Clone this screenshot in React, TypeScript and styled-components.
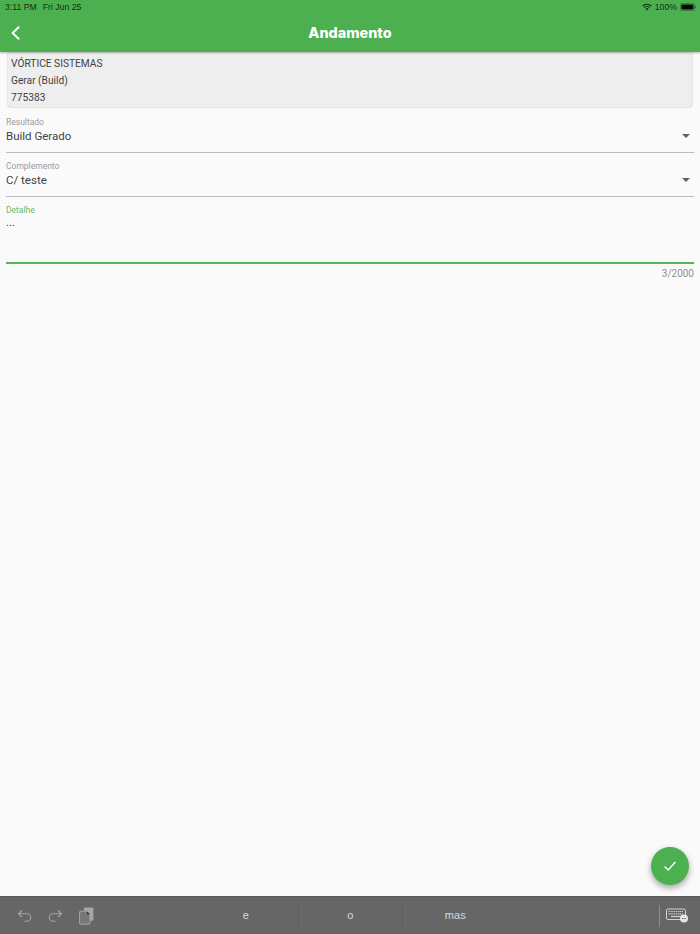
import React from "react";
import styled, { createGlobalStyle } from "styled-components";

const Global = createGlobalStyle`
  html, body { margin: 0; padding: 0; background: #fafafa; }
  #root { height: 934px; }
  * { box-sizing: border-box; }
`;

const Page = styled.div`
  width: 700px;
  height: 934px;
  display: flex;
  flex-direction: column;
  background: #fafafa;
  font-family: Roboto, "Liberation Sans", sans-serif;
  position: relative;
  overflow: hidden;
`;

const Header = styled.header`
  height: 52px;
  flex: none;
  background: #4caf50;
  box-shadow: 0 1px 2px rgba(0, 0, 0, 0.28);
  display: flex;
  flex-direction: column;
  position: relative;
  z-index: 2;
`;

const StatusBar = styled.div`
  height: 13px;
  padding: 1px 4px 0 5px;
  display: flex;
  align-items: center;
  justify-content: space-between;
  font-family: "Liberation Sans", sans-serif;
  font-size: 8.7px;
  color: #12300f;
`;

const StatusGroup = styled.div`
  display: flex;
  align-items: center;
  gap: 6px;
`;

const StatusRight = styled(StatusGroup)`
  gap: 3px;
`;

const NavBar = styled.div`
  flex: 1;
  display: flex;
  align-items: center;
  justify-content: center;
  position: relative;
`;

const BackButton = styled.div`
  position: absolute;
  left: 10px;
  top: 12px;
  width: 12px;
  height: 16px;
  display: flex;
`;

const Title = styled.h1`
  margin: 0;
  font-family: Inter, sans-serif;
  font-weight: 800;
  font-size: 14.4px;
  color: #fff;
`;

const Content = styled.main`
  flex: 1;
  padding: 1px 6px 0;
  display: flex;
  flex-direction: column;
`;

const Card = styled.section`
  margin: 0 2px;
  height: 54px;
  flex: none;
  background: #eeeeee;
  border-radius: 0 0 3px 3px;
  box-shadow: 0 0 1.5px rgba(0, 0, 0, 0.4);
  padding: 2px 3px 0;
  font-size: 10.2px;
  color: #424242;
  display: flex;
  flex-direction: column;
`;

const CardLine = styled.div`
  height: 17px;
  line-height: 17px;
`;

const Field = styled.div<{ $height: number; $top: number; $active?: boolean }>`
  height: ${(p) => p.$height}px;
  flex: none;
  border-bottom: ${(p) => (p.$active ? "2px solid #55b359" : "1px solid #bdbdbd")};
  position: relative;
  padding-top: ${(p) => p.$top}px;
`;

const FieldLabel = styled.div<{ $active?: boolean }>`
  font-size: 8.5px;
  line-height: 10px;
  color: ${(p) => (p.$active ? "#66bb6a" : "#9a9a9a")};
`;

const FieldValue = styled.div`
  font-size: 11.5px;
  line-height: 14px;
  margin-top: 2px;
  color: #424242;
`;

const DetailValue = styled(FieldValue)`
  margin-top: 0;
`;

const Caret = styled.span`
  position: absolute;
  right: 4px;
  bottom: 14px;
  width: 0;
  height: 0;
  border-left: 4px solid transparent;
  border-right: 4px solid transparent;
  border-top: 4px solid #616161;
`;

const Counter = styled.div`
  font-size: 10px;
  line-height: 12px;
  margin-top: 4px;
  text-align: right;
  color: #8f8f8f;
`;

const Fab = styled.button`
  position: absolute;
  right: 11px;
  bottom: 49px;
  width: 38px;
  height: 38px;
  border: 0;
  padding: 0;
  border-radius: 50%;
  background: #4caf50;
  box-shadow: 0 3px 6px rgba(0, 0, 0, 0.35);
  display: flex;
  align-items: center;
  justify-content: center;
`;

const Keyboard = styled.footer`
  height: 38px;
  flex: none;
  background: #666666;
  border-top: 1px solid #5a5a5a;
  display: flex;
  align-items: center;
  position: relative;
`;

const ToolGroup = styled.div`
  width: 194px;
  padding-left: 17px;
  display: flex;
  align-items: center;
  gap: 16px;
`;

const Suggestions = styled.div`
  display: flex;
  height: 24px;
  align-items: center;
`;

const Suggestion = styled.div<{ $divider?: boolean }>`
  width: 104.5px;
  height: 24px;
  text-align: center;
  font-size: 11px;
  font-family: "Liberation Sans", sans-serif;
  color: #d8d8d8;
  line-height: 22px;
  border-right: ${(p) => (p.$divider ? "1px solid #5e5e5e" : "0")};
`;

const KeyboardToggle = styled.div`
  margin-left: auto;
  margin-right: 11px;
  display: flex;
  align-items: center;
  gap: 6px;
`;

const ToggleDivider = styled.span`
  width: 1px;
  height: 22px;
  background: #8c8c8c;
`;

export default function App() {
  return (
    <Page>
      <Global />
      <Header>
        <StatusBar>
          <StatusGroup>
            <span>3:11 PM</span>
            <span>Fri Jun 25</span>
          </StatusGroup>
          <StatusRight>
            <svg width="10" height="8" viewBox="0 0 10 8">
              <path d="M0.3 2.6a6.6 6.6 0 0 1 9.4 0l-.8.8a5.5 5.5 0 0 0-7.8 0z" fill="#12300f" />
              <path d="M1.9 4.2a4.4 4.4 0 0 1 6.2 0l-.8.8a3.2 3.2 0 0 0-4.6 0z" fill="#12300f" />
              <path d="M3.5 5.7a2.1 2.1 0 0 1 3 0L5 7.4z" fill="#12300f" />
            </svg>
            <span>100%</span>
            <svg width="16" height="8" viewBox="0 0 16 8">
              <rect x="0.4" y="0.4" width="14" height="7.2" rx="1.8" fill="none" stroke="#2f6e32" strokeWidth="0.8" />
              <rect x="1.4" y="1.4" width="12" height="5.2" rx="1" fill="#050a05" />
              <rect x="15" y="2.8" width="1" height="2.4" rx="0.5" fill="#2f6e32" />
            </svg>
          </StatusRight>
        </StatusBar>
        <NavBar>
          <BackButton>
            <svg width="12" height="16" viewBox="0 0 12 16">
              <path d="M8.6 2.2 2.6 8l6 5.8" fill="none" stroke="#fff" strokeWidth="2" strokeLinecap="round" strokeLinejoin="round" />
            </svg>
          </BackButton>
          <Title>Andamento</Title>
        </NavBar>
      </Header>
      <Content>
        <Card>
          <CardLine>VÓRTICE SISTEMAS</CardLine>
          <CardLine>Gerar (Build)</CardLine>
          <CardLine>775383</CardLine>
        </Card>
        <Field $height={46} $top={10}>
          <FieldLabel>Resultado</FieldLabel>
          <FieldValue>Build Gerado</FieldValue>
          <Caret />
        </Field>
        <Field $height={44} $top={8}>
          <FieldLabel>Complemento</FieldLabel>
          <FieldValue>C/ teste</FieldValue>
          <Caret />
        </Field>
        <Field $height={67} $top={8} $active>
          <FieldLabel $active>Detalhe</FieldLabel>
          <DetailValue>...</DetailValue>
        </Field>
        <Counter>3/2000</Counter>
      </Content>
      <Fab aria-label="Confirmar">
        <svg width="14" height="14" viewBox="0 0 14 14">
          <path d="M1.6 7.4 5.2 11l7.2-8" fill="none" stroke="#fff" strokeWidth="1.4" />
        </svg>
      </Fab>
      <Keyboard>
        <ToolGroup>
          <svg width="15" height="14" viewBox="0 0 15 14">
            <path d="M5 1.5 1.6 4.8 5 8M1.8 4.8h8.2a3.6 3.6 0 0 1 0 7.4H7.5" fill="none" stroke="#a6a6a6" strokeWidth="1.1" />
          </svg>
          <svg width="15" height="14" viewBox="0 0 15 14">
            <path d="M10 1.5l3.4 3.3L10 8M13.2 4.8H5a3.6 3.6 0 0 0 0 7.4h2.5" fill="none" stroke="#a6a6a6" strokeWidth="1.1" />
          </svg>
          <svg width="15" height="18" viewBox="0 0 15 18">
            <path d="M5 2.5V1.4C5 .9 5.3.6 5.8.6h7.6c.6 0 1 .4 1 1v11.2c0 .6-.4 1-1 1h-1.6z" fill="#a6a6a6" />
            <path d="M1 4.2h7l3 3v9c0 .6-.4 1-1 1H1.6c-.6 0-1-.4-1-1V4.8z" fill="#777" stroke="#a6a6a6" strokeWidth="1" />
            <path d="M8 4.2v3h3z" fill="#333" />
          </svg>
        </ToolGroup>
        <Suggestions>
          <Suggestion $divider>e</Suggestion>
          <Suggestion $divider>o</Suggestion>
          <Suggestion>mas</Suggestion>
        </Suggestions>
        <KeyboardToggle>
          <ToggleDivider />
          <svg width="23" height="15" viewBox="0 0 23 15">
            <rect x="0.5" y="1" width="19" height="10.5" rx="1.5" fill="none" stroke="#d0d0d0" />
            <path d="M2.5 3.5h15M2.5 5.8h15" stroke="#d0d0d0" strokeWidth="1.2" strokeDasharray="1.2 .7" />
            <path d="M5 8.5h10" stroke="#d0d0d0" strokeWidth="1.2" />
            <circle cx="18" cy="10.5" r="4" fill="#e6e6e6" />
            <path d="M16 10.5h4" stroke="#666" strokeWidth="1" strokeDasharray="1 .6" />
          </svg>
        </KeyboardToggle>
      </Keyboard>
    </Page>
  );
}
